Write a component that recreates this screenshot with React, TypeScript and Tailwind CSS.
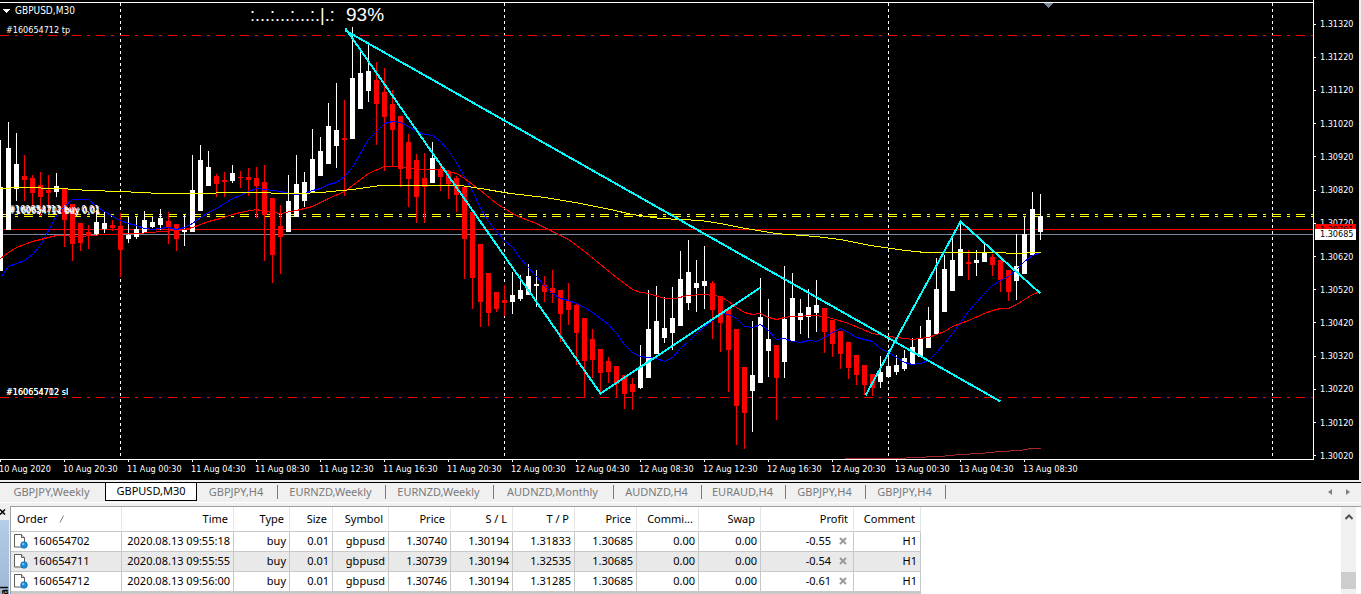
import React from "react";

type Candle = [high: number, low: number, top: number, bottom: number, up: 0 | 1];

const STEP = 8;

const candles: Candle[] = [
  [140, 271, 187, 271, 1], [122, 230, 148, 230, 1], [133, 201, 164, 189, 1], [155, 201, 176, 180, 0],
  [175, 206, 178, 193, 0], [172, 216, 185, 197, 0], [175, 211, 190, 193, 0], [173, 197, 186, 192, 1],
  [188, 247, 189, 220, 0], [204, 261, 204, 244, 0], [223, 251, 223, 243, 0], [225, 249, 232, 236, 0],
  [210, 236, 222, 234, 1], [212, 233, 223, 229, 1], [220, 231, 225, 228, 0], [213, 277, 226, 250, 0],
  [217, 243, 235, 239, 1], [217, 239, 229, 237, 1], [211, 233, 220, 233, 1], [217, 228, 222, 227, 1],
  [209, 230, 218, 225, 1], [212, 244, 221, 227, 0], [224, 251, 224, 239, 0], [215, 246, 230, 232, 1],
  [155, 232, 190, 232, 1], [145, 211, 160, 211, 1], [151, 186, 167, 186, 1], [174, 197, 176, 184, 0],
  [172, 197, 180, 182, 0], [165, 183, 173, 181, 1], [171, 188, 177, 178, 0], [168, 196, 177, 180, 0],
  [167, 218, 178, 186, 0], [165, 261, 182, 215, 0], [198, 283, 198, 255, 0], [205, 274, 226, 237, 0],
  [175, 232, 201, 232, 1], [155, 217, 184, 217, 1], [172, 207, 182, 201, 1], [129, 192, 159, 192, 1],
  [137, 176, 151, 176, 1], [103, 164, 126, 164, 1], [83, 168, 130, 146, 1], [100, 196, 138, 140, 0],
  [27, 139, 78, 139, 1], [50, 109, 73, 109, 1], [44, 102, 71, 91, 1], [62, 145, 80, 104, 0],
  [68, 171, 92, 117, 0], [90, 167, 104, 130, 0], [116, 187, 116, 169, 0], [134, 207, 142, 179, 0],
  [154, 223, 160, 197, 0], [153, 223, 178, 187, 0], [142, 183, 158, 183, 1], [164, 191, 170, 177, 0],
  [170, 199, 172, 184, 0], [176, 212, 178, 195, 0], [187, 279, 187, 239, 0], [212, 309, 212, 278, 0],
  [244, 327, 244, 302, 0], [273, 326, 273, 313, 0], [292, 312, 292, 309, 0], [285, 316, 300, 303, 0],
  [272, 314, 295, 302, 1], [275, 301, 290, 299, 1], [264, 295, 276, 295, 1], [270, 307, 284, 286, 1],
  [276, 302, 285, 292, 0], [270, 303, 288, 293, 0], [290, 342, 290, 314, 0], [283, 325, 301, 310, 0],
  [304, 365, 305, 333, 0], [318, 397, 318, 361, 0], [329, 378, 339, 360, 0], [349, 392, 349, 373, 0],
  [357, 383, 361, 372, 0], [366, 397, 366, 384, 0], [375, 409, 375, 394, 0], [378, 410, 384, 392, 0],
  [345, 389, 367, 388, 1], [290, 378, 329, 378, 1], [286, 354, 321, 354, 1], [297, 343, 328, 338, 1],
  [287, 350, 318, 333, 1], [251, 326, 279, 326, 1], [240, 310, 272, 303, 1], [260, 312, 283, 288, 1],
  [246, 309, 281, 286, 1], [281, 339, 283, 310, 0], [296, 352, 296, 323, 0], [309, 392, 309, 350, 0],
  [329, 445, 329, 406, 0], [367, 449, 367, 413, 0], [321, 432, 375, 391, 1], [278, 383, 317, 383, 1],
  [299, 377, 339, 351, 1], [345, 420, 345, 378, 0], [266, 378, 319, 362, 1], [273, 341, 298, 341, 1],
  [299, 334, 313, 320, 1], [289, 338, 307, 317, 1], [280, 332, 305, 313, 1], [308, 353, 308, 332, 0],
  [320, 357, 320, 344, 0], [331, 369, 331, 354, 0], [342, 379, 342, 368, 0], [355, 385, 355, 375, 0],
  [365, 395, 365, 385, 0], [374, 396, 374, 388, 0], [356, 388, 372, 382, 1], [350, 377, 366, 377, 1],
  [355, 375, 365, 372, 1], [350, 371, 358, 369, 1], [338, 364, 347, 364, 1], [326, 357, 339, 357, 1],
  [307, 348, 320, 348, 1], [258, 334, 289, 334, 1], [255, 312, 269, 312, 1], [235, 291, 260, 291, 1],
  [221, 276, 249, 276, 1], [250, 280, 262, 264, 0], [250, 276, 260, 263, 1], [244, 262, 252, 262, 1],
  [254, 276, 257, 265, 0], [260, 292, 260, 280, 0], [270, 301, 270, 292, 0], [234, 300, 266, 281, 1],
  [217, 274, 234, 274, 1], [192, 255, 209, 255, 1], [194, 240, 216, 232, 1],
];

const fastAverage =
  "0,277 8,266 16,263 24,260 32,254 40,245 48,230 56,215 64,206 72,199 88,199 96,206 104,211 112,216 120,220 128,223 136,225 144,228 152,229 160,228 168,227 176,229 184,227 192,223 200,217 208,212 216,208 224,203 232,198 240,195 248,191 256,188 272,190 280,191 288,193 296,194 304,193 312,190 320,188 328,184 336,182 344,176 352,167 360,153 368,139 376,131 384,123 392,121 400,122 408,126 416,131 424,134 432,135 440,141 448,150 456,162 464,176 472,190 480,208 488,221 496,231 504,240 512,247 520,258 528,267 536,276 544,285 552,293 560,298 568,300 576,303 584,307 592,312 600,318 608,324 616,333 624,344 632,352 640,356 656,358 664,361 672,357 680,348 688,341 696,333 704,326 712,320 720,313 728,314 736,318 744,326 752,327 760,324 768,330 776,339 784,338 792,341 800,342 808,340 816,341 824,337 832,332 840,328 848,332 856,337 864,339 872,341 880,348 888,352 896,357 904,362 912,364 920,363 928,360 936,352 944,343 952,333 960,322 968,311 976,302 984,293 992,285 1000,280 1008,276 1016,269 1024,261 1032,255 1040,252";

const mediumAverage =
  "0,258 8,252 16,247 24,244 32,241 40,239 48,237 56,235 80,236 104,234 136,233 152,232 160,231 180,230 192,227 200,224 208,221 220,218 232,214 240,212 256,209 264,211 280,213 296,210 312,206 328,198 344,191 352,185 368,173 384,166 400,166 416,169 440,169 448,171 456,173 464,178 472,184 480,190 496,203 504,208 512,213 520,217 536,223 552,231 560,235 568,239 584,251 600,264 616,277 632,289 640,292 648,293 664,298 674,298 688,295 704,294 720,296 728,301 736,307 744,312 752,314 760,313 768,317 776,319 784,317 792,316 816,315 832,318 848,323 860,328 872,333 888,336 904,338 912,339 928,337 944,331 952,326 968,320 984,313 992,310 1000,308 1008,308 1016,304 1024,299 1032,294 1040,291";

const slowAverage =
  "0,188 20,187 60,188 88,190 120,191 160,193 192,193 240,192 300,193 320,192 352,189 380,185 460,185 480,188 510,193 545,197 580,203 610,209 632,214 660,218 680,219 700,220 720,223 745,228 775,233 815,236 840,239 870,245 905,250 925,252 985,252 1025,253 1028,252 1040,252";

const longAverage =
  "844,458 900,458 912,457 940,456 960,454 980,453 1000,451 1020,450 1030,448 1040,448";

const prices = [
  "1.31320", "1.31220", "1.31120", "1.31020", "1.30920", "1.30820", "1.30720",
  "1.30620", "1.30520", "1.30420", "1.30320", "1.30220", "1.30120", "1.30020",
];

const times = [
  "10 Aug 2020", "10 Aug 20:30", "11 Aug 00:30", "11 Aug 04:30", "11 Aug 08:30", "11 Aug 12:30",
  "11 Aug 16:30", "11 Aug 20:30", "12 Aug 00:30", "12 Aug 04:30", "12 Aug 08:30", "12 Aug 12:30",
  "12 Aug 16:30", "12 Aug 20:30", "13 Aug 00:30", "13 Aug 04:30", "13 Aug 08:30",
];

const tabs = [
  { label: "GBPJPY,Weekly", width: "w-[105px]" },
  { label: "GBPUSD,M30", width: "w-[92px]", active: true },
  { label: "GBPJPY,H4", width: "w-[81px]", divider: true },
  { label: "EURNZD,Weekly", width: "w-[108px]", divider: true },
  { label: "EURNZD,Weekly", width: "w-[108px]", divider: true },
  { label: "AUDNZD,Monthly", width: "w-[120px]", divider: true },
  { label: "AUDNZD,H4", width: "w-[88px]", divider: true },
  { label: "EURAUD,H4", width: "w-[84px]", divider: true },
  { label: "GBPJPY,H4", width: "w-20", divider: true },
  { label: "GBPJPY,H4", width: "w-20", divider: true },
];

const columns = [
  { label: "Order", width: "w-[111px]" },
  { label: "Time", width: "w-28" },
  { label: "Type", width: "w-14" },
  { label: "Size", width: "w-[43px]" },
  { label: "Symbol", width: "w-14" },
  { label: "Price", width: "w-[62px]" },
  { label: "S / L", width: "w-[62px]" },
  { label: "T / P", width: "w-[62px]" },
  { label: "Price", width: "w-[62px]" },
  { label: "Commi...", width: "w-[62px]" },
  { label: "Swap", width: "w-[62px]" },
  { label: "Profit", width: "w-[93px]" },
  { label: "Comment", width: "w-[67px]" },
];

const orders = [
  { id: "160654702", cells: ["2020.08.13 09:55:18", "buy", "0.01", "gbpusd", "1.30740", "1.30194", "1.31833", "1.30685", "0.00", "0.00"], profit: "-0.55", comment: "H1" },
  { id: "160654711", cells: ["2020.08.13 09:55:55", "buy", "0.01", "gbpusd", "1.30739", "1.30194", "1.32535", "1.30685", "0.00", "0.00"], profit: "-0.54", comment: "H1" },
  { id: "160654712", cells: ["2020.08.13 09:56:00", "buy", "0.01", "gbpusd", "1.30746", "1.30194", "1.31285", "1.30685", "0.00", "0.00"], profit: "-0.61", comment: "H1" },
];

function Level({ y, color, dashed }: { y: number; color: string; dashed?: boolean }) {
  return (
    <line x1="0" x2="100%" y1={y + 0.5} y2={y + 0.5} stroke={color} strokeDasharray={dashed ? "9 6 3 6" : undefined} />
  );
}

function Plot() {
  return (
    <svg
      className="block h-[460px] min-w-0 flex-1 text-[9px]"
      shapeRendering="crispEdges"
      role="img"
      aria-label="GBPUSD M30 candlestick chart"
    >
      {[120, 504, 888, 1272].map((x) => (
        <line key={x} x1={x + 0.5} x2={x + 0.5} y1="3" y2="459" stroke="#fff" strokeDasharray="3 3" />
      ))}
      <Level y={35} color="#ff0000" dashed />
      <Level y={397} color="#ff0000" dashed />
      <Level y={214} color="#ffff00" dashed />
      <Level y={216} color="#ffff00" dashed />
      <Level y={229} color="#ff0000" />
      <Level y={234} color="#778899" />

      {candles.map(([high, low, top, bottom, up], i) => (
        <g key={i} fill={up ? "#ffffff" : "#ff0000"}>
          <rect x={i * STEP} y={high} width="1" height={low - high} />
          <rect x={i * STEP - 2} y={top} width="5" height={bottom - top} />
        </g>
      ))}

      <g fill="none" transform="translate(0.5 0.5)">
        <polyline points={longAverage} stroke="#a52a2a" />
        <polyline points={fastAverage} stroke="#0000ff" />
        <polyline points={mediumAverage} stroke="#ff0000" />
        <polyline points={slowAverage} stroke="#ffff00" />
        <g stroke="#00ffff" strokeWidth="2">
          <polyline points="345,30 1000,401" />
          <polyline points="345,28 600,393 760,287" />
          <polyline points="865,395 960,221 1040,293" />
        </g>
      </g>

      <path d="M0 2.5H4000" stroke="#fff" />
      <path d="M0 459.500H4000" stroke="#fff" />
      <path d="M1043 3h10l-5 5z" fill="#778899" />
      <path d="M3 9h7l-3.500 4z" fill="#fff" />
      <g fill="#fff">
        <text x="15" y="14" className="text-[10px]">GBPUSD,M30</text>
        <text x="6" y="33">#160654712 tp</text>
        <text x="8" y="212">#160654712 buy 0.01</text>
        <text x="9" y="214">#160654711 buy 0.01</text>
        <text x="9" y="213">#160654702 buy 0.01</text>
        <text x="6" y="395">#160654702 sl</text>
        <text x="6" y="395">#160654712 sl</text>
        <g className="font-['Liberation_Sans',sans-serif]">
          <text x="250" y="21" className="text-[18px]">:...:...:...:.|.:</text>
          <text x="346" y="21" className="text-[19px]">93%</text>
        </g>
      </g>
    </svg>
  );
}

function PriceAxis() {
  return (
    <div className="relative h-[460px] w-[46px] shrink-0 border-l border-white">
      <div className="flex h-[462px] flex-col justify-between pt-[18px]">
        {prices.map((p) => (
          <div key={p} className="flex h-3 items-center gap-1 leading-3">
            <span className="h-px w-0.5 bg-white" />
            {p}
          </div>
        ))}
      </div>
      <div className="absolute left-px top-[224px] h-3 w-[41px] bg-[#ff0000] pl-[5px] leading-3 text-black">1.30701</div>
      <div className="absolute left-px top-[229px] h-[11px] w-[41px] bg-white pl-[5px] leading-[11px] text-black">1.30685</div>
    </div>
  );
}

function OrderIcon() {
  return (
    <svg className="h-4 w-4 shrink-0" viewBox="0 0 16 16" aria-hidden="true">
      <path d="M2.500 1.500h7l3 3v9.500h-10z" fill="#fff" stroke="#5c5c5c" />
      <path d="M9.500 1.500v3h3" fill="#e4e4e4" stroke="#5c5c5c" />
      <circle cx="12" cy="12" r="3.300" fill="#1d8fdc" stroke="#0b62a8" strokeWidth=".7" />
      <circle cx="11.200" cy="11" r="1.100" fill="#8fd0fa" />
    </svg>
  );
}

export default function App() {
  return (
    <div className="flex min-h-screen flex-col bg-[#f0f0f0] font-['Noto_Sans',sans-serif] text-[11px] text-black">
      <main className="mr-0.5 h-[480px] shrink-0 overflow-hidden bg-black font-['DejaVu_Sans_Condensed','DejaVu_Sans',sans-serif] text-[9px] text-white">
        <div className="flex">
          <Plot />
          <PriceAxis />
        </div>
        <div className="flex h-5">
          {times.map((t) => (
            <div key={t} className="w-16 shrink-0">
              <div className="h-0.5 w-px bg-white" />
              <div className="-ml-px whitespace-nowrap leading-[14px]">{t}</div>
            </div>
          ))}
        </div>
      </main>

      <nav className="mt-0.5 flex h-5 shrink-0 items-stretch border-t border-black">
        {tabs.map((tab, i) =>
          tab.active ? (
            <button key={i} className={`${tab.width} mb-px shrink-0 border-x border-b border-black bg-white pb-px leading-4`}>
              {tab.label}
            </button>
          ) : (
            <button key={i} className={`${tab.width} flex shrink-0 items-center pb-0.5 text-[#7a7a7a]`}>
              <span className="flex-1 whitespace-nowrap pr-0.5 leading-4">{tab.label}</span>
              {tab.divider && <span className="h-3.5 w-px bg-[#7a7a7a]" />}
            </button>
          )
        )}
        <div className="ml-auto flex items-center gap-3 pb-0.5 pr-2.5">
          <button aria-label="Scroll tabs left">
            <svg className="h-2 w-1.5" viewBox="0 0 6 8"><path d="M5 1v6L1 4z" fill="#808080" /></svg>
          </button>
          <button aria-label="Scroll tabs right">
            <svg className="h-2 w-1.5" viewBox="0 0 6 8"><path d="M1 1v6l4-3z" fill="#808080" /></svg>
          </button>
        </div>
      </nav>

      <section className="flex flex-1 border-t border-white pt-[3px]">
        <aside className="relative w-2.5 shrink-0 overflow-hidden">
          <button aria-label="Close panel" className="flex h-3 w-1.5 items-center">
            <svg className="h-1.5 w-1.5" viewBox="0 0 6 6"><path d="M0 .5l5 5M5 .5l-5 5" stroke="#000" strokeWidth="1.500" /></svg>
          </button>
          <div className="absolute bottom-0 left-0 top-3.5 w-[9px] overflow-hidden bg-linear-to-b from-[#b4cde8] to-[#9db7d6]">
            <span className="absolute left-[-2px] top-[66px] rotate-180 text-[10px] font-bold leading-3 [writing-mode:vertical-rl]">
              Terminal
            </span>
          </div>
        </aside>

        <div className="flex min-w-0 flex-1 border-l border-t border-[#a0a0a0] bg-white">
          <div className="min-w-0 flex-1 overflow-hidden">
            <table className="w-[910px] table-fixed border-separate border-spacing-0 text-right">
              <thead>
                <tr className="h-[25px]">
                  {columns.map((c, i) => (
                    <th key={i} className={`${c.width} whitespace-nowrap border-b border-r border-b-[#c8c8c8] border-r-[#e5e5e5] p-0 pr-[5px] font-normal`}>
                      {i === 0 ? (
                        <span className="flex items-center gap-3 pl-1.5">
                          {c.label}
                          <svg className="h-2 w-1.5" viewBox="0 0 6 8"><path d="M1 7.500L4.500 .5" stroke="#808080" /></svg>
                        </span>
                      ) : (
                        c.label
                      )}
                    </th>
                  ))}
                </tr>
              </thead>
              <tbody>
                {orders.map((o) => (
                  <tr key={o.id} className="h-5 leading-4 even:bg-[#e9e9e9] *:border-b *:border-r *:border-[#c8c8c8] *:p-0 *:pb-0.5 *:pr-[3px]">
                    <td>
                      <span className="flex items-center gap-[5px] pl-px">
                        <OrderIcon />
                        {o.id}
                      </span>
                    </td>
                    {o.cells.map((v, i) => (
                      <td key={i} className="whitespace-nowrap">{v}</td>
                    ))}
                    <td>
                      <span className="flex items-center justify-end gap-2 pr-[3px]">
                        {o.profit}
                        <button aria-label={`Close order ${o.id}`}>
                          <svg className="h-2 w-2" viewBox="0 0 8 8"><path d="M1 1l6 6M7 1L1 7" stroke="#9a9a9a" strokeWidth="2" /></svg>
                        </button>
                      </span>
                    </td>
                    <td>{o.comment}</td>
                  </tr>
                ))}
              </tbody>
            </table>
            <div className="h-0.5 w-[910px] bg-[#c8c8c8]" />
          </div>
          <div className="mr-[5px] flex w-[15px] shrink-0 flex-col items-center bg-[#f0f0f0] pb-[5px]">
            <button aria-label="Scroll up" className="flex h-5 w-full items-center justify-center">
              <svg className="h-2 w-2" viewBox="0 0 8 8"><path d="M.5 6L4 2.500 7.500 6" fill="none" stroke="#505050" strokeWidth="2" /></svg>
            </button>
            <div className="mt-auto h-[17px] w-full bg-[#cdcdcd]" />
          </div>
        </div>
      </section>
    </div>
  );
}
